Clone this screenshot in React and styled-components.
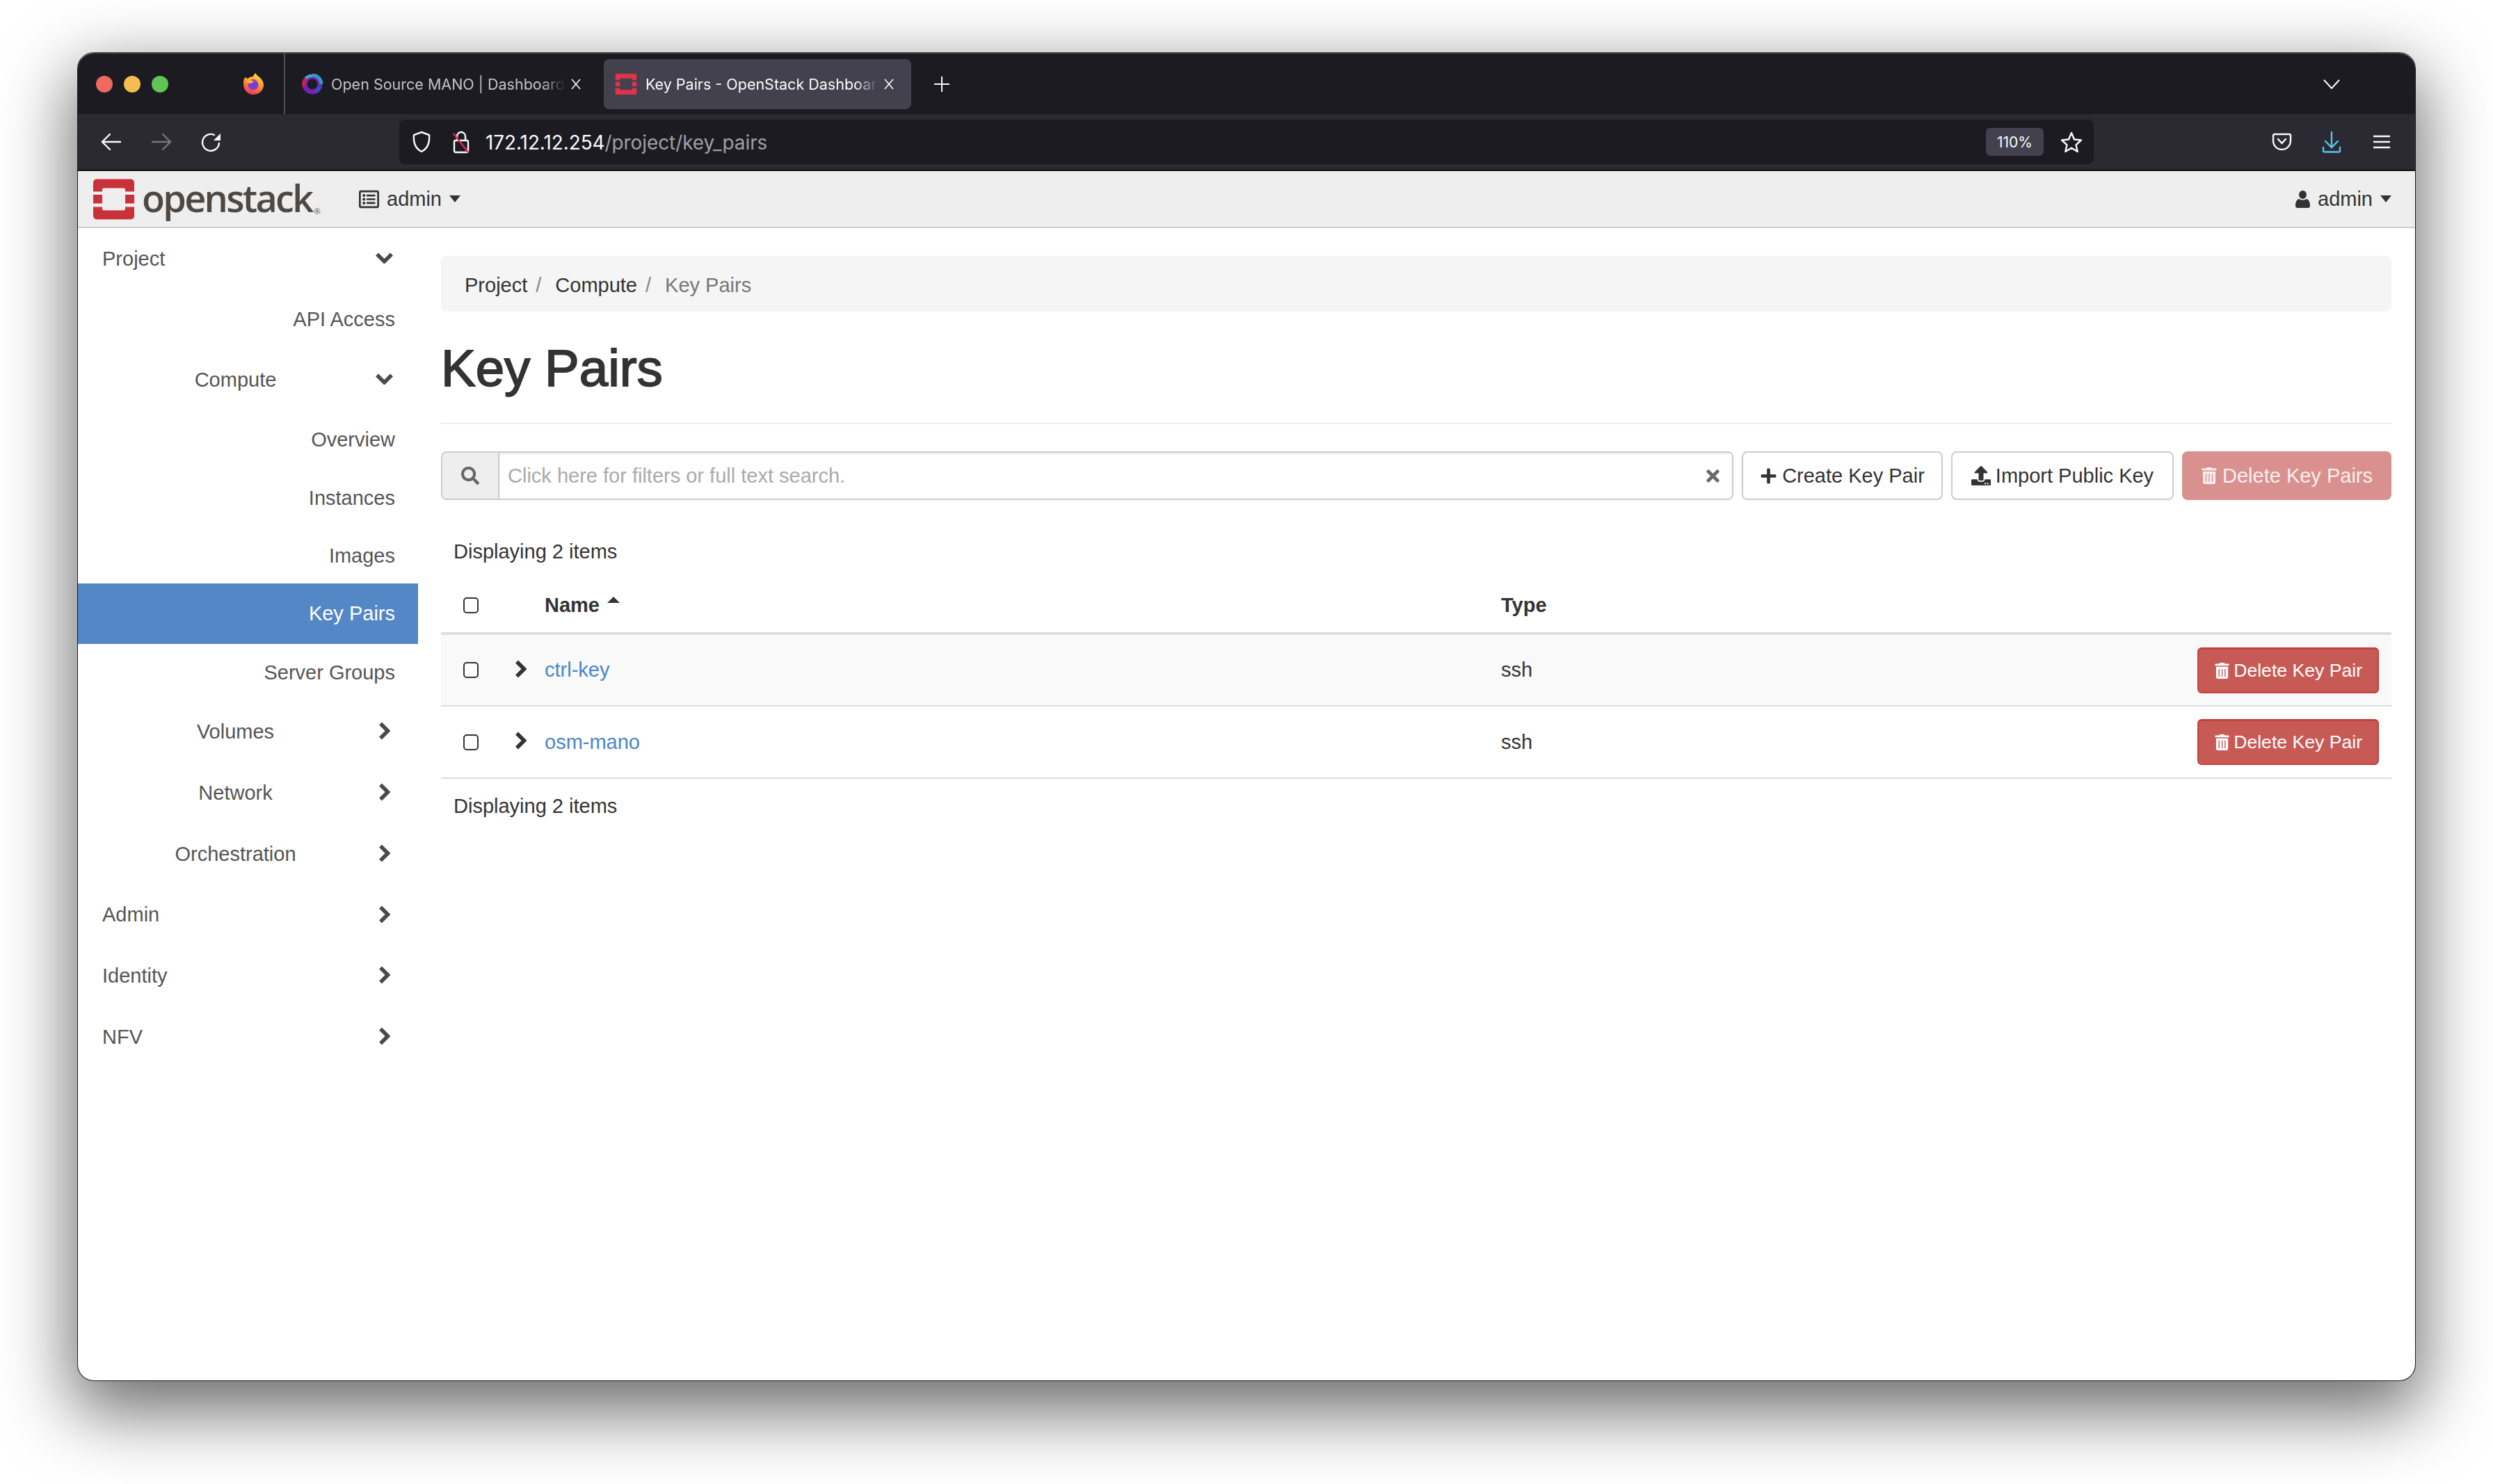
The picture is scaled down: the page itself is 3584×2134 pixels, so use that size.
import React from "react";
import styled, { createGlobalStyle } from "styled-components";
import { FaPlus, FaRegListAlt, FaSearch, FaTimes, FaTrashAlt, FaUpload } from "react-icons/fa";

const GlobalStyle = createGlobalStyle`
  html, body {
    margin: 0;
    background: #fff;
  }

  * {
    box-sizing: border-box;
  }
`;

const OsLogo = ({ size, color }) => (
  <svg width={size} height={size} viewBox="0 0 59 58">
    <rect width="59" height="58" rx="5" fill={color} />
    <rect y="18" width="59" height="4.5" fill="#eee" />
    <rect y="35" width="59" height="5" fill="#eee" />
    <rect x="13" y="13" width="33" height="32" rx="2" fill="#eee" />
  </svg>
);

const TabLogo = () => (
  <svg width="32" height="30" viewBox="0 0 59 58">
    <rect width="59" height="58" rx="3" fill="#e0324b" />
    <rect y="18" width="59" height="4.5" fill="#42414d" />
    <rect y="35" width="59" height="5" fill="#42414d" />
    <rect x="13" y="13" width="33" height="32" fill="#42414d" />
  </svg>
);

const FirefoxLogo = () => (
  <svg width="30" height="31" viewBox="0 0 30 31">
    <defs>
      <linearGradient id="fx" x1="0.7" y1="0" x2="0.3" y2="1">
        <stop offset="0" stopColor="#ffe14a" />
        <stop offset="0.45" stopColor="#ff9a2b" />
        <stop offset="1" stopColor="#f2305f" />
      </linearGradient>
    </defs>
    <path
      d="M1 13C1 9 3 6 5 6c0 1 1 2 2 2 2-2 6-3 8-3 0-2 2-4 4-5 0 3 3 4 6 7 3 3 5 6 5 10 0 8-7 14-15 14S0 24 1 13z"
      fill="url(#fx)"
    />
    <circle cx="15" cy="17" r="7.5" fill="#7b3fd0" />
    <path d="M5 12c3-2 8-2 11 0-2 1-3 3-5 3-3 0-5-1-6-3z" fill="#ffb02e" />
    <path d="M12 9c3-1 7 0 9 3-3-1-6-1-9-3z" fill="#d63ba8" />
  </svg>
);

const OsmLogo = () => (
  <svg width="30" height="30" viewBox="0 0 30 30" fill="none">
    <circle cx="15" cy="15" r="11" stroke="#7a1fb8" strokeWidth="7" />
    <path d="M15 2a13 13 0 0 1 13 13" stroke="#2f9ac9" strokeWidth="5" />
    <path d="M5 7a13 13 0 0 1 10-4" stroke="#38b3c7" strokeWidth="4" />
    <path d="M3 18a12 12 0 0 1 3-11" stroke="#c8234f" strokeWidth="5" />
    <path d="M26 18a12 12 0 0 1-6 8" stroke="#2a55c4" strokeWidth="5" />
  </svg>
);

const CloseGlyph = () => (
  <svg width="16" height="16" viewBox="0 0 16 16" stroke="#fbfbfe" strokeWidth="1.6">
    <path d="M2 1l12 14M14 1L2 15" />
  </svg>
);

const PlusGlyph = () => (
  <svg width="24" height="24" viewBox="0 0 24 24" stroke="#fbfbfe" strokeWidth="2">
    <path d="M12 1v22M1 12h22" />
  </svg>
);

const DownGlyph = () => (
  <svg width="24" height="14" viewBox="0 0 24 14" fill="none" stroke="#fbfbfe" strokeWidth="2">
    <path d="M1 1l11 12L23 1" />
  </svg>
);

const ArrowGlyph = ({ flip, color }) => (
  <svg
    width="30"
    height="26"
    viewBox="0 0 30 26"
    fill="none"
    stroke={color}
    strokeWidth="2.4"
    strokeLinecap="round"
    style={flip ? { transform: "scaleX(-1)" } : undefined}
  >
    <path d="M13 2L2 13l11 11M2 13h26" />
  </svg>
);

const ReloadGlyph = () => (
  <svg width="30" height="30" viewBox="0 0 30 30" fill="none">
    <path d="M26 17A12 12 0 1 1 19 5" stroke="#fbfbfe" strokeWidth="2.4" strokeLinecap="round" />
    <path d="M28 3v10H18z" fill="#fbfbfe" />
  </svg>
);

const ShieldGlyph = () => (
  <svg width="30" height="32" viewBox="0 0 30 32" fill="none" stroke="#fbfbfe" strokeWidth="2.4">
    <path d="M15 2l11 4c1 12-3 20-11 24C7 26 3 18 4 6z" />
  </svg>
);

const LockGlyph = () => (
  <svg width="28" height="33" viewBox="0 0 28 33" fill="none">
    <path d="M8 14V8a6 6 0 0 1 12 0v6" stroke="#fbfbfe" strokeWidth="2.4" />
    <rect x="4" y="14" width="20" height="17" rx="2" stroke="#fbfbfe" strokeWidth="2.4" />
    <path d="M3 4l21 27" stroke="#e22850" strokeWidth="2.6" />
  </svg>
);

const StarGlyph = () => (
  <svg width="32" height="31" viewBox="0 0 32 31" fill="none" stroke="#fbfbfe" strokeWidth="2.4" strokeLinejoin="round">
    <path d="M16 2l4 9.500 10 1-7.500 6.800 2.200 9.700L16 23.800 7.300 29l2.200-9.700L2 12.500l10-1z" />
  </svg>
);

const PocketGlyph = () => (
  <svg width="29" height="26" viewBox="0 0 29 26" fill="none" stroke="#fbfbfe" strokeWidth="2.4" strokeLinecap="round">
    <path d="M4 2h21a2 2 0 0 1 2 2v7c0 8-6 13-12.500 13S2 19 2 11V4a2 2 0 0 1 2-2z" />
    <path d="M9 9l5.500 6L20 9" />
  </svg>
);

const DownloadGlyph = () => (
  <svg width="28" height="31" viewBox="0 0 28 31" fill="none" stroke="#54c7ef" strokeWidth="2.4" strokeLinecap="round">
    <path d="M14 1v21M5 14l9 9 9-9" />
    <path d="M2 23v5a1.500 1.500 0 0 0 1.500 1.500h21A1.500 1.500 0 0 0 26 28v-5" />
  </svg>
);

const MenuGlyph = () => (
  <svg width="26" height="20" viewBox="0 0 26 20" stroke="#fbfbfe" strokeWidth="2.4">
    <path d="M1 2h24M1 10h24M1 18h24" />
  </svg>
);

const UserIcon = () => (
  <svg width="21" height="25" viewBox="0 0 21 25" fill="#333">
    <ellipse cx="10.500" cy="6" rx="5.500" ry="6" />
    <path d="M0 22c0-6 2-9 5-10 3 2 8 2 11 0 3 1 5 4 5 10 0 2-1 3-3 3H3c-2 0-3-1-3-3z" />
  </svg>
);

// chunky font-awesome style chevrons
const ChevronDown = () => (
  <svg width="25" height="16" viewBox="0 0 25 16" fill="none" stroke="currentColor" strokeWidth="5.500">
    <path d="M2 2.500l10.500 10.500L23 2.500" />
  </svg>
);

const ChevronRight = () => (
  <svg width="17" height="26" viewBox="0 0 17 26" fill="none" stroke="currentColor" strokeWidth="5.500">
    <path d="M3 2.500L13.500 13 3 23.500" />
  </svg>
);

const navItems = [
  { label: "Project", kind: "top", open: true, h: 88 },
  { label: "API Access", kind: "leaf", h: 86 },
  { label: "Compute", kind: "group", open: true, h: 88 },
  { label: "Overview", kind: "leaf", h: 84 },
  { label: "Instances", kind: "leaf", h: 85 },
  { label: "Images", kind: "leaf", h: 80 },
  { label: "Key Pairs", kind: "leaf", active: true, h: 87 },
  { label: "Server Groups", kind: "leaf", h: 82 },
  { label: "Volumes", kind: "group", h: 88 },
  { label: "Network", kind: "group", h: 88 },
  { label: "Orchestration", kind: "group", h: 88 },
  { label: "Admin", kind: "top", h: 87 },
  { label: "Identity", kind: "top", h: 88 },
  { label: "NFV", kind: "top", h: 88 },
];

const keyPairs = ["ctrl-key", "osm-mano"];

export default function App() {
  return (
    <Stage>
      <GlobalStyle />
      <Window>
        <TabStrip>
          <TrafficLights>
            <Light $color="#ee6a5f" />
            <Light $color="#f5bd4f" />
            <Light $color="#61c454" />
          </TrafficLights>
          <FirefoxSlot>
            <FirefoxLogo />
          </FirefoxSlot>
          <TabDivider />
          <Tab>
            <OsmLogo />
            <TabTitle>Open Source MANO | Dashboard</TabTitle>
            <CloseGlyph />
          </Tab>
          <Tab $active>
            <TabLogo />
            <TabTitle $active>Key Pairs - OpenStack Dashboard</TabTitle>
            <CloseGlyph />
          </Tab>
          <NewTab>
            <PlusGlyph />
          </NewTab>
          <TabList>
            <DownGlyph />
          </TabList>
        </TabStrip>

        <NavBar>
          <NavGroup>
            <NavButton>
              <ArrowGlyph color="#fbfbfe" />
            </NavButton>
            <NavButton>
              <ArrowGlyph flip color="#77767e" />
            </NavButton>
            <NavButton>
              <ReloadGlyph />
            </NavButton>
          </NavGroup>
          <UrlBar>
            <ShieldGlyph />
            <LockSlot>
              <LockGlyph />
            </LockSlot>
            <UrlText>
              172.12.12.254<UrlPath>/project/key_pairs</UrlPath>
            </UrlText>
            <ZoomPill>110%</ZoomPill>
            <StarSlot>
              <StarGlyph />
            </StarSlot>
          </UrlBar>
          <NavGroup>
            <NavButton>
              <PocketGlyph />
            </NavButton>
            <NavButton>
              <DownloadGlyph />
            </NavButton>
            <NavButton>
              <MenuGlyph />
            </NavButton>
          </NavGroup>
        </NavBar>

        <Header>
          <Brand>
            <OsLogo size={59} color="#c9313a" />
            <Wordmark>
              openstack<Registered>®</Registered>
            </Wordmark>
          </Brand>
          <Dropdown>
            <FaRegListAlt size={29} />
            <span>admin</span>
            <Caret />
          </Dropdown>
          <UserMenu>
            <UserIcon />
            <span>admin</span>
            <Caret />
          </UserMenu>
        </Header>

        <Body>
          <Sidebar>
            {navItems.map((item) => (
              <NavItem key={item.label} $kind={item.kind} $active={item.active} $h={item.h}>
                <NavLabel $kind={item.kind}>{item.label}</NavLabel>
                {item.kind !== "leaf" && (
                  <NavChevron>{item.open ? <ChevronDown /> : <ChevronRight />}</NavChevron>
                )}
              </NavItem>
            ))}
          </Sidebar>

          <Main>
            <Breadcrumb>
              <Crumb>Project</Crumb>
              <CrumbSlash>/</CrumbSlash>
              <Crumb>Compute</Crumb>
              <CrumbSlash>/</CrumbSlash>
              <Crumb $current>Key Pairs</Crumb>
            </Breadcrumb>
            <PageHeader>
              <Title>Key Pairs</Title>
            </PageHeader>

            <Toolbar>
              <SearchGroup>
                <SearchAddon>
                  <FaSearch size={26} />
                </SearchAddon>
                <SearchField>
                  <SearchInput placeholder="Click here for filters or full text search." />
                  <FaTimes size={27} color="#6b6b6b" />
                </SearchField>
              </SearchGroup>
              <ToolButton $width={289}>
                <FaPlus size={25} />
                Create Key Pair
              </ToolButton>
              <ToolButton $width={320}>
                <FaUpload size={28} />
                Import Public Key
              </ToolButton>
              <ToolButton $width={301} $danger>
                <FaTrashAlt size={24} />
                Delete Key Pairs
              </ToolButton>
            </Toolbar>

            <CountLine>Displaying 2 items</CountLine>
            <Table>
              <colgroup>
                <col width="90" />
                <col width="59" />
                <col width="1375" />
                <col width="600" />
                <col />
              </colgroup>
              <thead>
                <tr>
                  <HeadCell>
                    <Check type="checkbox" />
                  </HeadCell>
                  <HeadCell />
                  <HeadCell>
                    <NameHead>
                      Name
                      <SortCaret />
                    </NameHead>
                  </HeadCell>
                  <HeadCell>Type</HeadCell>
                  <HeadCell />
                </tr>
              </thead>
              <tbody>
                {keyPairs.map((name, i) => (
                  <Row key={name} $striped={i === 0}>
                    <Cell>
                      <Check type="checkbox" />
                    </Cell>
                    <Cell>
                      <RowChevron>
                        <ChevronRight />
                      </RowChevron>
                    </Cell>
                    <Cell>
                      <KeyLink>{name}</KeyLink>
                    </Cell>
                    <Cell>ssh</Cell>
                    <ActionCell>
                      <RowDelete>
                        <FaTrashAlt size={23} />
                        Delete Key Pair
                      </RowDelete>
                    </ActionCell>
                  </Row>
                ))}
              </tbody>
            </Table>
            <FootLine>Displaying 2 items</FootLine>
          </Main>
        </Body>
      </Window>
    </Stage>
  );
}

const Stage = styled.div`
  height: 2134px;
  padding: 75px 111px 148px;
  overflow: hidden;
  background: #fff;
`;

const Window = styled.div`
  display: flex;
  flex-direction: column;
  height: 100%;
  overflow: hidden;
  background: #fff;
  border: 1px solid #1b1b1b;
  border-top: 2px solid #4a4a4a;
  border-radius: 24px;
  box-shadow: 0 36px 100px 8px rgba(0, 0, 0, 0.58);
  font-family: "Liberation Sans", Arial, sans-serif;
  font-size: 29px;
  color: #333;
`;

const TabStrip = styled.div`
  display: flex;
  align-items: center;
  flex: none;
  height: 87px;
  background: #1c1b22;
`;

const TrafficLights = styled.div`
  display: flex;
  gap: 16px;
  margin-left: 26px;
`;

const Light = styled.span`
  width: 24px;
  height: 24px;
  border-radius: 50%;
  background: ${(p) => p.$color};
`;

const FirefoxSlot = styled.div`
  display: flex;
  margin-left: 107px;
`;

const TabDivider = styled.div`
  align-self: stretch;
  width: 2px;
  margin: 0 8px 0 29px;
  background: #4c4b52;
`;

const Tab = styled.div`
  display: flex;
  align-items: center;
  gap: 12px;
  width: 442px;
  height: 72px;
  margin-right: 8px;
  margin-top: 1px;
  padding: 0 24px 0 16px;
  border-radius: 8px;
  background: ${(p) => (p.$active ? "#42414d" : "transparent")};
  svg:last-child {
    margin-left: -4px;
  }
`;

const TabTitle = styled.span`
  flex: 1;
  min-width: 0;
  overflow: hidden;
  white-space: nowrap;
  font-family: Inter, "Liberation Sans", sans-serif;
  font-size: 21.500px;
  color: ${(p) => (p.$active ? "#fbfbfe" : "#c4c4c8")};
  mask-image: linear-gradient(to right, #000 90%, transparent);
`;

const NewTab = styled.div`
  display: flex;
  margin-left: 24px;
`;

const TabList = styled.div`
  display: flex;
  margin-left: auto;
  margin-right: 108px;
`;

const NavBar = styled.div`
  display: flex;
  align-items: center;
  justify-content: space-between;
  flex: none;
  height: 82px;
  padding: 0 12px;
  background: #2b2a33;
  border-bottom: 2px solid #0c0c0d;
`;

const NavGroup = styled.div`
  display: flex;
`;

const NavButton = styled.div`
  display: flex;
  align-items: center;
  justify-content: center;
  width: 72px;
`;

const UrlBar = styled.div`
  display: flex;
  align-items: center;
  width: 2436px;
  height: 64px;
  padding: 0 16px 0 17px;
  border-radius: 8px;
  background: #1c1b22;
`;

const LockSlot = styled.div`
  display: flex;
  margin: 0 21px 0 28px;
`;

const UrlText = styled.span`
  flex: 1;
  padding-top: 1px;
  font-family: Inter, "Liberation Sans", sans-serif;
  font-size: 27.800px;
  color: #fbfbfe;
`;

const UrlPath = styled.span`
  color: #a0a0a8;
`;

const ZoomPill = styled.span`
  display: flex;
  align-items: center;
  justify-content: center;
  width: 83px;
  height: 40px;
  border-radius: 6px;
  background: #42414d;
  font-family: Inter, "Liberation Sans", sans-serif;
  font-size: 21px;
  color: #fbfbfe;
`;

const StarSlot = styled.div`
  display: flex;
  margin-left: 24px;
`;

const Header = styled.header`
  display: flex;
  align-items: center;
  flex: none;
  height: 82px;
  padding: 0 34px 0 22px;
  background: #eee;
  border-bottom: 2px solid #ccc;
`;

const Brand = styled.div`
  display: flex;
  align-items: center;
  gap: 11px;
  width: 382px;
`;

const Wordmark = styled.span`
  margin-bottom: 5px;
  font-family: "Open Sans", sans-serif;
  font-size: 54px;
  font-weight: 600;
  line-height: 60px;
  letter-spacing: -2.700px;
  color: #4f4843;
`;

const Registered = styled.sup`
  margin-left: 3px;
  font-size: 11px;
  font-weight: 400;
  line-height: 0;
  vertical-align: -3px;
  letter-spacing: 0;
`;

const Dropdown = styled.div`
  display: flex;
  align-items: center;
  gap: 11px;
`;

const UserMenu = styled(Dropdown)`
  margin-left: auto;
`;

const Caret = styled.span`
  width: 0;
  height: 0;
  border-left: 8.500px solid transparent;
  border-right: 8.500px solid transparent;
  border-top: 10px solid #333;
`;

const Body = styled.div`
  display: flex;
  flex: 1;
  min-height: 0;
`;

const Sidebar = styled.nav`
  flex: none;
  width: 489px;
`;

const NavItem = styled.div`
  display: flex;
  align-items: center;
  height: ${(p) => p.$h}px;
  padding-left: ${(p) => (p.$kind === "top" ? 35 : 26)}px;
  padding-right: ${(p) => (p.$kind === "leaf" ? 33 : 36)}px;
  background: ${(p) => (p.$active ? "#5487c5" : "transparent")};
  color: ${(p) => (p.$active ? "#fff" : "#555")};
`;

const NavLabel = styled.span`
  flex: 1;
  text-align: ${(p) => ({ top: "left", group: "center", leaf: "right" })[p.$kind]};
`;

const NavChevron = styled.span`
  display: flex;
  align-items: center;
  justify-content: center;
  flex: none;
  width: 26px;
  margin-bottom: 2px;
  color: #4a4a4a;
`;

const Main = styled.main`
  flex: 1;
  min-width: 0;
  padding: 40px 34px 0 33px;
`;

const Breadcrumb = styled.div`
  display: flex;
  align-items: center;
  height: 80px;
  padding: 5px 34px 0;
  border-radius: 8px;
  background: #f5f5f5;
`;

const Crumb = styled.span`
  color: ${(p) => (p.$current ? "#777" : "#333")};
`;

const CrumbSlash = styled.span`
  margin: 0 20px 0 12px;
  color: #888;
`;

const PageHeader = styled.div`
  height: 162px;
  padding-top: 42px;
  border-bottom: 2px solid #eee;
`;

const Title = styled.h1`
  margin: 0;
  font-size: 74.500px;
  font-weight: 400;
  line-height: 80px;
  -webkit-text-stroke: 1.800px #333;
`;

const Toolbar = styled.div`
  display: flex;
  align-items: stretch;
  gap: 12px;
  height: 70px;
  margin-top: 39px;
`;

const SearchGroup = styled.div`
  display: flex;
  flex: 1;
  min-width: 0;
  border: 2px solid #ccc;
  border-radius: 8px;
  overflow: hidden;
`;

const SearchAddon = styled.div`
  display: flex;
  align-items: center;
  justify-content: center;
  flex: none;
  width: 82px;
  background: #eee;
  border-right: 2px solid #ccc;
  color: #666;
`;

const SearchField = styled.div`
  display: flex;
  align-items: center;
  flex: 1;
  padding: 0 14px 0 12px;
  box-shadow: inset 0 2px 2px rgba(0, 0, 0, 0.08);
`;

const SearchInput = styled.input`
  flex: 1;
  min-width: 0;
  border: 0;
  outline: 0;
  padding: 0;
  background: transparent;
  font: inherit;
  &::placeholder {
    color: #aaa;
    opacity: 1;
  }
`;

const ToolButton = styled.div`
  display: flex;
  align-items: center;
  justify-content: center;
  gap: 7px;
  flex: none;
  width: ${(p) => p.$width}px;
  border: 2px solid ${(p) => (p.$danger ? "#d98f8c" : "#ccc")};
  border-radius: 8px;
  background: ${(p) => (p.$danger ? "#d9918f" : "#fff")};
  color: ${(p) => (p.$danger ? "#fbeeee" : "#333")};
`;

const CountLine = styled.div`
  display: flex;
  align-items: center;
  height: 40px;
  margin-top: 54px;
  padding-left: 18px;
`;

const Table = styled.table`
  width: 100%;
  table-layout: fixed;
  border-collapse: collapse;
`;

const HeadCell = styled.th`
  height: 98px;
  padding: 18px 0 0;
  border-bottom: 4px solid #ddd;
  text-align: left;
  &:first-child {
    padding-left: 32px;
  }
`;

const NameHead = styled.span`
  display: inline-flex;
  align-items: center;
  gap: 11px;
`;

const SortCaret = styled.span`
  width: 0;
  height: 0;
  margin-bottom: 15px;
  border-left: 9px solid transparent;
  border-right: 9px solid transparent;
  border-bottom: 9px solid #333;
`;

const Check = styled.input`
  display: block;
  appearance: none;
  width: 22px;
  height: 23px;
  margin: 0;
  border: 2px solid #333;
  border-radius: 5px;
  background: #fff;
`;

const Row = styled.tr`
  background: ${(p) => (p.$striped ? "#f9f9f9" : "#fff")};
`;

const Cell = styled.td`
  height: 104px;
  padding: 0;
  border-bottom: 2px solid #ddd;
  &:first-child {
    padding-left: 32px;
  }
`;

const RowChevron = styled.span`
  display: flex;
  margin: 0 0 4px 16px;
  color: #333;
`;

const ActionCell = styled(Cell)`
  padding-right: 18px;
  text-align: right;
`;

const KeyLink = styled.a`
  color: #4a86c8;
`;

const RowDelete = styled.div`
  display: inline-flex;
  align-items: center;
  gap: 5px;
  height: 66px;
  padding: 0 22px;
  border: 2px solid #c1413c;
  border-top-width: 3px;
  border-radius: 6px;
  background: #c85a55;
  color: #fff;
  font-size: 26.600px;
`;

const FootLine = styled.div`
  margin-top: 19px;
  padding-left: 18px;
  line-height: 40px;
`;
